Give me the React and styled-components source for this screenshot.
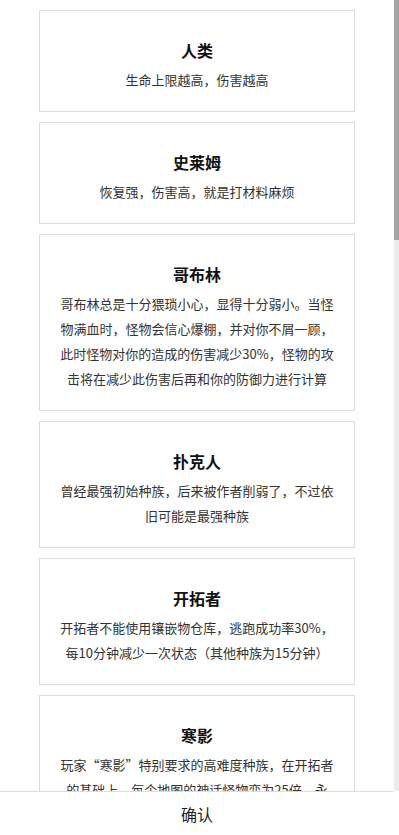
import React from "react";
import styled, { createGlobalStyle } from "styled-components";

const GlobalStyle = createGlobalStyle`
  html, body {
    margin: 0;
    padding: 0;
    height: 100%;
    background: #fff;
    font-family: "Noto Sans CJK SC", "Noto Sans", sans-serif;
  }
  #root {
    height: 100%;
  }
`;

const Page = styled.div`
  display: flex;
  flex-direction: column;
  height: 100vh;
  background: #fff;
`;

const Body = styled.div`
  flex: 1;
  min-height: 0;
  display: flex;
`;

const ScrollArea = styled.div`
  flex: 1;
  overflow-y: auto;
  padding: 10px 39px;
  display: flex;
  flex-direction: column;
  gap: 10px;
  scrollbar-width: none;

  &::-webkit-scrollbar {
    display: none;
  }
`;

// drawn scroll track, the headless window hides native bars
const Track = styled.div`
  width: 5px;
  flex-shrink: 0;
  background: #ececec;
`;

const Thumb = styled.div`
  height: ${(p) => p.size}px;
  background: #a3a3a3;
`;

const Card = styled.div`
  flex-shrink: 0;
  border: 1px solid #dcdcdc;
  padding: 22px 20px 19px;
  text-align: center;
`;

const Title = styled.h2`
  margin: 0;
  font-size: 16px;
  line-height: 34px;
  font-weight: 600;
  color: #111;
`;

const Desc = styled.p`
  margin: 0;
  font-size: 13px;
  line-height: 25px;
  color: #333;
`;

const BottomBar = styled.div`
  flex-shrink: 0;
  height: 43px;
  margin-right: 5px;
  border-top: 1px solid #dcdcdc;
  display: flex;
  align-items: center;
  justify-content: center;
  font-size: 16px;
  color: #222;
  background: #fff;
  cursor: pointer;
`;

const races = [
  { name: "人类", desc: "生命上限越高，伤害越高" },
  { name: "史莱姆", desc: "恢复强，伤害高，就是打材料麻烦" },
  {
    name: "哥布林",
    desc: "哥布林总是十分猥琐小心，显得十分弱小。当怪物满血时，怪物会信心爆棚，并对你不屑一顾，此时怪物对你的造成的伤害减少30%，怪物的攻击将在减少此伤害后再和你的防御力进行计算",
  },
  { name: "扑克人", desc: "曾经最强初始种族，后来被作者削弱了，不过依旧可能是最强种族" },
  {
    name: "开拓者",
    desc: "开拓者不能使用镶嵌物仓库，逃跑成功率30%，每10分钟减少一次状态（其他种族为15分钟）",
  },
  {
    name: "寒影",
    desc: "玩家“寒影”特别要求的高难度种族，在开拓者的基础上，每个地图的神话怪物变为25倍，永久死亡，角色死亡后存档将被删除，请谨慎选择",
  },
  { name: "精灵", desc: "天生亲近自然，魔法伤害提高，物理防御较低" },
  { name: "矮人", desc: "擅长锻造，装备强化成功率提高，移动速度较慢" },
  { name: "兽人", desc: "力量强大，攻击力提高20%，但无法使用部分法术类技能" },
  { name: "亡灵", desc: "不会因中毒而受到伤害，受到治疗效果减半，夜晚时属性提升" },
  { name: "龙裔", desc: "拥有龙族血统，全属性小幅提升，升级所需经验增加50%" },
  { name: "机械人", desc: "不需要进食，每次战斗后需要消耗能量进行修复，防御力极高" },
  { name: "天使", desc: "神圣伤害提高，对亡灵类怪物造成额外伤害，受到暗影伤害增加" },
  { name: "恶魔", desc: "击杀怪物时恢复少量生命，商店购买价格提高，无法进入神殿" },
  { name: "影子", desc: "闪避率大幅提高，生命上限降低，首次攻击必定暴击" },
];

export default function App() {
  return (
    <>
      <GlobalStyle />
      <Page>
        <Body>
          <ScrollArea>
            {races.map((r) => (
              <Card key={r.name}>
                <Title>{r.name}</Title>
                <Desc>{r.desc}</Desc>
              </Card>
            ))}
          </ScrollArea>
          <Track>
            <Thumb size={240} />
          </Track>
        </Body>
        <BottomBar>确认</BottomBar>
      </Page>
    </>
  );
}
